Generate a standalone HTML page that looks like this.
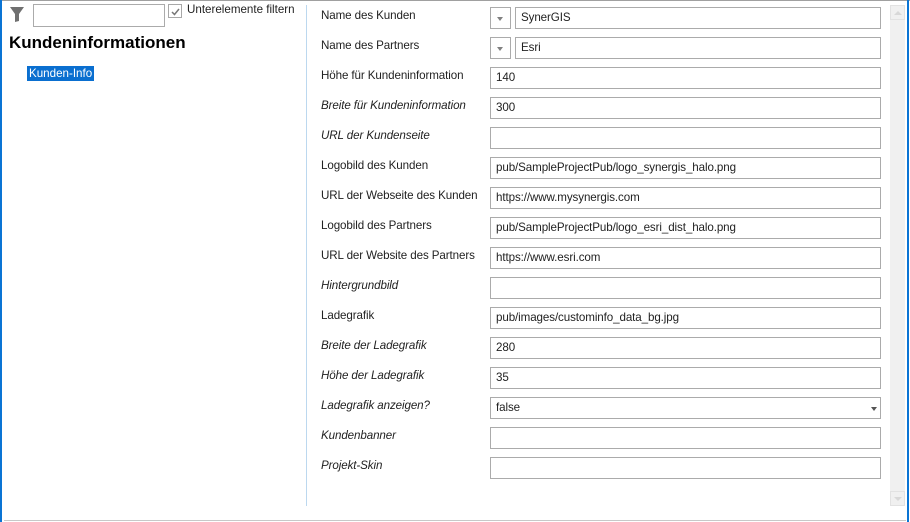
<!DOCTYPE html>
<html><head><meta charset="utf-8"><style>
*{margin:0;padding:0;box-sizing:border-box}
body{width:910px;height:522px;background:#fff;position:relative;overflow:hidden;font-family:"Segoe UI","Liberation Sans",sans-serif;font-size:11.6px;color:#222}
.a{position:absolute}
.lbl{position:absolute;left:321px;white-space:nowrap;letter-spacing:-0.1px}
.i{font-style:italic}
.inp{position:absolute;left:490px;width:391px;height:22px;border:1px solid #ababab;padding-left:5px;line-height:20px;white-space:nowrap;letter-spacing:-0.1px}
</style></head><body>
<div class="a" style="left:0;top:0;width:910px;height:1px;background:#a0a0a0"></div>
<div class="a" style="left:0;top:0;width:2px;height:522px;background:#0a74d4"></div>
<div class="a" style="left:907px;top:0;width:2px;height:522px;background:#0a74d4"></div>
<div class="a" style="left:4px;top:520px;width:902px;height:1px;background:#c8c8c8"></div>
<div class="a" style="left:306px;top:5px;width:1px;height:501px;background:#bcd8ef"></div>
<svg class="a" style="left:9px;top:6px" width="16" height="17" viewBox="0 0 16 17"><path d="M1 1h14l-5 7v7l-4 1v-8z" fill="#707070"/></svg>
<div class="a" style="left:33px;top:4px;width:132px;height:23px;border:1px solid #ababab"></div>
<div class="a" style="left:168px;top:4px;width:14px;height:14px;border:1px solid #a8a8a8"></div>
<svg class="a" style="left:170px;top:6px" width="11" height="11"><path d="M2 6l2.5 2.5L9 3" stroke="#777" stroke-width="1.5" fill="none"/></svg>
<div class="a" style="left:187px;top:3px;white-space:nowrap">Unterelemente filtern</div>
<div class="a" style="left:9px;top:33px;font-size:17px;font-weight:bold;color:#000;white-space:nowrap">Kundeninformationen</div>
<div class="a" style="left:27px;top:66px;height:15px;background:#0a6fd0;color:#fff;padding:0 2px;line-height:15px">Kunden-Info</div>

<div class="lbl" style="top:9px">Name des Kunden</div>
<div class="a" style="left:490px;top:7px;width:21px;height:22px;border:1px solid #ababab"></div>
<div class="a" style="left:497px;top:17px;border-left:3.5px solid transparent;border-right:3.5px solid transparent;border-top:4px solid #808080"></div>
<div class="inp" style="left:515px;width:366px;top:7px">SynerGIS</div>
<div class="lbl" style="top:39px">Name des Partners</div>
<div class="a" style="left:490px;top:37px;width:21px;height:22px;border:1px solid #ababab"></div>
<div class="a" style="left:497px;top:47px;border-left:3.5px solid transparent;border-right:3.5px solid transparent;border-top:4px solid #808080"></div>
<div class="inp" style="left:515px;width:366px;top:37px">Esri</div>

<div class="lbl" style="top:69px">Höhe für Kundeninformation</div><div class="inp" style="top:67px">140</div>
<div class="lbl i" style="top:99px">Breite für Kundeninformation</div><div class="inp" style="top:97px">300</div>
<div class="lbl i" style="top:129px">URL der Kundenseite</div><div class="inp" style="top:127px"></div>
<div class="lbl" style="top:159px">Logobild des Kunden</div><div class="inp" style="top:157px">pub/SampleProjectPub/logo_synergis_halo.png</div>
<div class="lbl" style="top:189px">URL der Webseite des Kunden</div><div class="inp" style="top:187px">https://www.mysynergis.com</div>
<div class="lbl" style="top:219px">Logobild des Partners</div><div class="inp" style="top:217px">pub/SampleProjectPub/logo_esri_dist_halo.png</div>
<div class="lbl" style="top:249px">URL der Website des Partners</div><div class="inp" style="top:247px">https://www.esri.com</div>
<div class="lbl i" style="top:279px">Hintergrundbild</div><div class="inp" style="top:277px"></div>
<div class="lbl" style="top:309px">Ladegrafik</div><div class="inp" style="top:307px">pub/images/custominfo_data_bg.jpg</div>
<div class="lbl i" style="top:339px">Breite der Ladegrafik</div><div class="inp" style="top:337px">280</div>
<div class="lbl i" style="top:369px">Höhe der Ladegrafik</div><div class="inp" style="top:367px">35</div>
<div class="lbl i" style="top:399px">Ladegrafik anzeigen?</div><div class="inp" style="top:397px">false</div>
<div class="a" style="left:871px;top:407px;border-left:3px solid transparent;border-right:3px solid transparent;border-top:4px solid #555"></div>
<div class="lbl i" style="top:429px">Kundenbanner</div><div class="inp" style="top:427px"></div>
<div class="lbl i" style="top:459px">Projekt-Skin</div><div class="inp" style="top:457px"></div>

<div class="a" style="left:890px;top:5px;width:15px;height:501px;background:#f0f0f0"></div>
<div class="a" style="left:890px;top:5px;width:15px;height:15px;border:1px solid #e2e2e2"></div>
<div class="a" style="left:894px;top:11px;border-left:4px solid transparent;border-right:4px solid transparent;border-bottom:4px solid #d8d8d8"></div>
<div class="a" style="left:890px;top:491px;width:15px;height:15px;border:1px solid #e2e2e2"></div>
<div class="a" style="left:894px;top:497px;border-left:4px solid transparent;border-right:4px solid transparent;border-top:4px solid #d8d8d8"></div>
</body></html>
